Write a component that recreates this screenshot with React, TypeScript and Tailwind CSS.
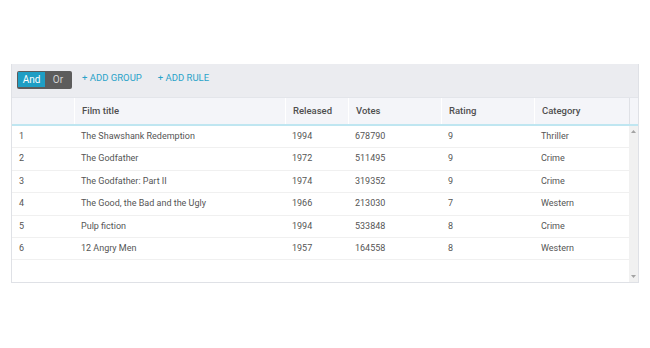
import React from 'react';

const films = [
  { id: 1, title: 'The Shawshank Redemption', year: 1994, votes: 678790, rating: 9, category: 'Thriller' },
  { id: 2, title: 'The Godfather', year: 1972, votes: 511495, rating: 9, category: 'Crime' },
  { id: 3, title: 'The Godfather: Part II', year: 1974, votes: 319352, rating: 9, category: 'Crime' },
  { id: 4, title: 'The Good, the Bad and the Ugly', year: 1966, votes: 213030, rating: 7, category: 'Western' },
  { id: 5, title: 'Pulp fiction', year: 1994, votes: 533848, rating: 8, category: 'Crime' },
  { id: 6, title: '12 Angry Men', year: 1957, votes: 164558, rating: 8, category: 'Western' },
];

const cols = ['w-[62px]', 'w-[211px]', 'w-[63px]', 'w-[93px]', 'w-[93px]', 'w-[95px]'];

export default function App() {
  return (
    <div className="w-[650px] h-[348px] bg-white pt-[64px] pl-[11px]" style={{ fontFamily: 'Roboto, "Liberation Sans", sans-serif' }}>
      <div className="w-[628px] h-[219px] border border-[#dfe1e6] border-t-0 flex flex-col">
        {/* Toolbar */}
        <div className="h-[33px] bg-[#ebecf0] flex items-start pl-[5px] pt-[7px] shrink-0">
          <div className="flex h-[18px] bg-[#5c5c5c] p-[1px] pb-[2px] rounded-[2px]">
            <button className="w-[27px] h-full bg-[#1e9ec4] text-white text-[10px] leading-[15px]">And</button>
            <button className="w-[26px] h-full text-[#d4d4d4] text-[10px] leading-[15px]">Or</button>
          </div>
          <button className="ml-[10px] text-[9.5px] text-[#29a3c9] leading-[12px] mt-[1px]">+ ADD GROUP</button>
          <button className="ml-[16px] text-[9.5px] text-[#29a3c9] leading-[12px] mt-[1px]">+ ADD RULE</button>
        </div>

        {/* Header */}
        <div className="h-[29px] bg-[#f4f5f9] flex border-t border-[#e3e5ea] border-b-2 border-b-[#bfe6f1] shrink-0">
          {['', 'Film title', 'Released', 'Votes', 'Rating', 'Category'].map((h, i) => (
            <div key={i} className={`${cols[i]} px-[7px] flex items-center text-[9.5px] font-medium text-[#4f4f4f] ${i > 0 ? 'border-l border-white' : ''}`}>
              {h}
            </div>
          ))}
          <div className="flex-1 border-l border-[#dfe1e6]" />
        </div>

        {/* Body */}
        <div className="flex flex-1 min-h-0">
          <div className="flex-1">
            {films.map((f) => (
              <div key={f.id} className="h-[22.4px] flex border-b border-[#f0f0f0] text-[9px] text-[#555]">
                {[f.id, f.title, f.year, f.votes, f.rating, f.category].map((v, i) => (
                  <div key={i} className={`${cols[i]} px-[7px] flex items-center`}>
                    {v}
                  </div>
                ))}
              </div>
            ))}
          </div>
          <div className="w-[10px] bg-[#f1f1f1] flex flex-col justify-between items-center py-[4px]">
            <svg width="5" height="3" viewBox="0 0 5 3"><path d="M0 3 L2.5 0 L5 3 Z" fill="#a3a3a3" /></svg>
            <svg width="5" height="3" viewBox="0 0 5 3"><path d="M0 0 L2.5 3 L5 0 Z" fill="#a3a3a3" /></svg>
          </div>
        </div>
      </div>
    </div>
  );
}
